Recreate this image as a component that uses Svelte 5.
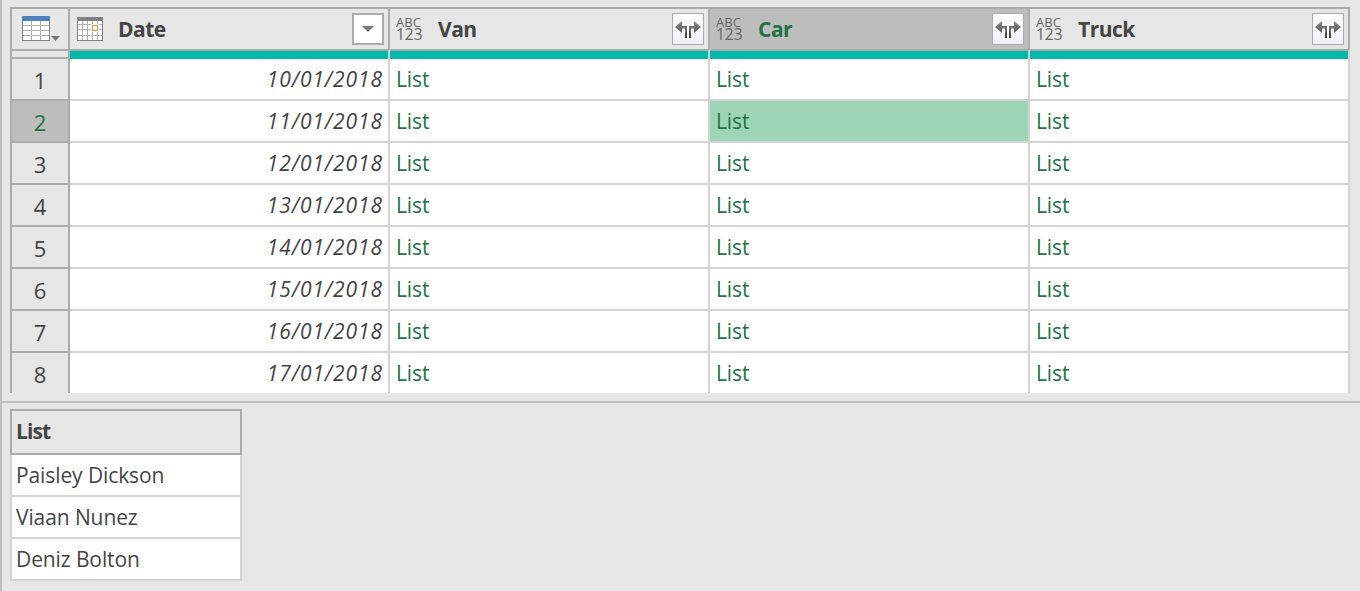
<script>
  const columns = [
    { name: 'Date', kind: 'date' },
    { name: 'Van', kind: 'any' },
    { name: 'Car', kind: 'any' },
    { name: 'Truck', kind: 'any' }
  ];
  const dates = [10, 11, 12, 13, 14, 15, 16, 17].map((d) => `${d}/01/2018`);
  const people = ['Paisley Dickson', 'Viaan Nunez', 'Deniz Bolton'];
  let selected = $state({ row: 1, column: 2 });
</script>

<main>
  <section class="grid">
    <div class="corner">
      <svg width="40" height="28" viewBox="0 0 40 28" shape-rendering="crispEdges">
        <path fill="#808080" d="M0 0h28v25H0z" />
        <path fill="#fff" d="M1 5h26v19H1z" />
        <path fill="#4f81bd" d="M0 0h28v5H0z" />
        <path fill="#b0b0b0" d="M1 9h26v1H1zM1 14h26v1H1zM1 19h26v1H1zM9 5h1v19H9zM18 5h1v19h-1z" />
        <path fill="#777" shape-rendering="auto" d="M29 20h9l-4.500 5z" />
      </svg>
    </div>
    {#each columns as col, c}
      <div class="head" class:active={c === selected.column}>
        {#if col.kind === 'date'}
          <svg class="calendar" width="26" height="24" viewBox="0 0 26 24" shape-rendering="crispEdges">
            <path fill="#808080" d="M0 0h26v24H0z" />
            <path fill="#fff" d="M1 4h24v19H1z" />
            <path fill="#b0b0b0" d="M1 7h24v1H1zM1 12h24v1H1zM1 18h24v1H1zM5 4h1v19H5zM10 4h1v19h-1zM15 4h1v19h-1zM20 4h1v19h-1z" />
            <path fill="#fff" d="M14 7h8v8h-8z" />
            <path fill="#fff" stroke="#ed8b34" d="M15.500 8.500h5v5h-5z" />
          </svg>
        {:else}
          <span class="type"><span>ABC</span><b>123</b></span>
        {/if}
        <span class="name">{col.name}</span>
        {#if col.kind === 'date'}
          <button class="drop" aria-label="Filter">
            <svg width="12" height="6" viewBox="0 0 12 6"><path fill="#777" d="M0 0h12L6 6z" /></svg>
          </button>
        {:else}
          <button class="expand" aria-label="Expand">
            <svg width="30" height="30" viewBox="0 0 30 30">
              <defs><linearGradient id="ink{c}" x2="0" y2="1"><stop stop-color="#888" /><stop offset="1" stop-color="#444" /></linearGradient></defs>
              <path fill="url(#ink{c})" d="M2 13l7-6v5h5v12h-2v-9.500H9V19zM28 13l-7-6v5h-5v12h2v-9.500h3V19z" />
            </svg>
          </button>
        {/if}
      </div>
    {/each}
    <div class="strip-corner"></div>
    {#each columns as col}<div class="strip"></div>{/each}
    {#each dates as date, r}
      <div class="number" class:active={r === selected.row}>{r + 1}</div>
      <div class="cell date"><span>{date}</span></div>
      {#each [1, 2, 3] as c}
        <div class="cell list" class:chosen={r === selected.row && c === selected.column}>List</div>
      {/each}
    {/each}
  </section>
  <section class="preview">
    <div class="items">
      <div class="title">List</div>
      {#each people as person}<div class="item">{person}</div>{/each}
    </div>
  </section>
</main>

<style>
  :global(body) { margin: 0; background: #e6e6e6; }
  main {
    box-sizing: border-box;
    height: 591px;
    overflow: hidden;
    border-left: 2px solid #bfbfbf;
    padding-top: 7px;
    background: #e6e6e6;
    color: #444;
    font: 21px "Open Sans", "Noto Sans", sans-serif;
    letter-spacing: -0.1px;
  }
  .grid {
    box-sizing: border-box;
    display: grid;
    grid-template-columns: 58px repeat(4, 320px);
    grid-template-rows: 42px 10px;
    grid-auto-rows: 42px;
    width: 1340px;
    height: 386px;
    margin-left: 8px;
    overflow: hidden;
    border-left: 2px solid #ababab;
  }
  .grid > div { box-sizing: border-box; }
  .corner, .head { border-top: 2px solid #ababab; border-right: 2px solid #ababab; }
  .corner { padding: 7px 0 0 10px; }
  .head { display: flex; align-items: flex-start; padding: 4px 4px 0 7px; }
  .head.active { background: #bdbdbd; color: #217346; }
  .calendar { margin-top: 4px; }
  .type {
    display: flex;
    flex-direction: column;
    width: 27px;
    margin-left: -1px;
    padding-top: 4px;
    font-size: 13px;
    font-weight: 500;
    line-height: 11px;
    color: #666;
    letter-spacing: 0.1px;
  }
  .type b { font-size: 15.500px; font-weight: 500; line-height: 13px; letter-spacing: 0; }
  .name { margin-left: 15px; font-weight: 700; line-height: 32px; letter-spacing: -0.5px; }
  button { box-sizing: border-box; display: grid; place-items: center; width: 32px; height: 32px; margin: 0 0 0 auto; padding: 0; }
  .drop { border: 2px solid #ababab; background: #fff; }
  .expand { border: 1px solid #a5acb8; background: linear-gradient(#fff, #eef0f7); }
  .strip-corner { border: solid #ababab; border-width: 2px 2px 2px 0; }
  .strip { border-top: 2px solid #ababab; border-right: 2px solid #d3d3d3; background: #01b8aa; }
  .number { border-right: 2px solid #ababab; border-bottom: 2px solid #ababab; line-height: 42px; text-align: center; font-size: 22px; }
  .number.active { background: #bdbdbd; color: #217346; }
  .cell { border-right: 2px solid #d3d3d3; border-bottom: 2px solid #d3d3d3; background: #fff; line-height: 41px; padding: 0 6px; }
  .date { padding-right: 5px; text-align: right; font-style: italic; letter-spacing: 0.900px; }
  .list { color: #217346; }
  .chosen { background: #9fd5b7; }
  .preview { height: 190px; margin-top: 8px; border-top: 2px solid #bfbfbf; padding: 6px 0 0 8px; }
  .items { box-sizing: border-box; width: 232px; }
  .title { box-sizing: border-box; height: 46px; border: 2px solid #ababab; padding-left: 4px; font-weight: 700; line-height: 40px; letter-spacing: -0.900px; }
  .item { box-sizing: border-box; height: 42px; border: solid #d3d3d3; border-width: 0 2px 2px; padding-left: 4px; background: #fff; line-height: 41px; }
</style>
